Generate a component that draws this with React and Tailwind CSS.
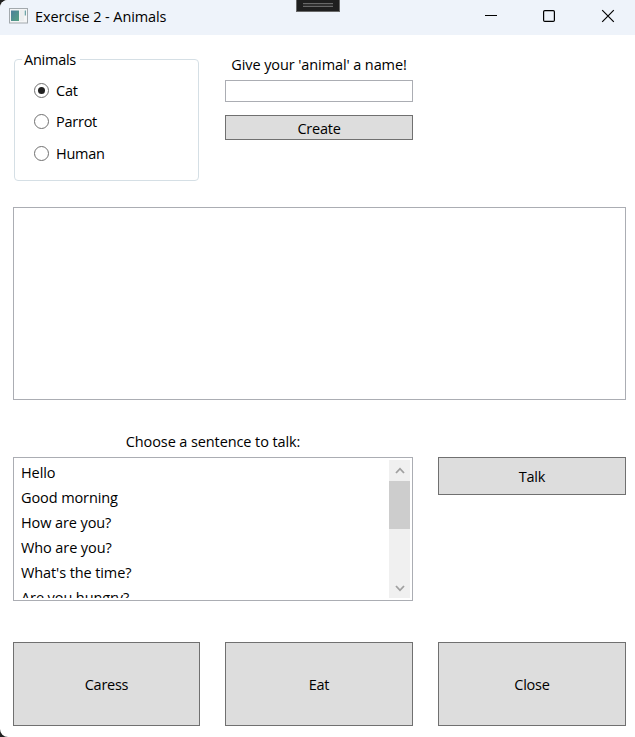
import React from "react";

const SENTENCES = [
  "Hello",
  "Good morning",
  "How are you?",
  "Who are you?",
  "What's the time?",
  "Are you hungry?",
];

function AppIcon() {
  return (
    <svg width="19" height="16" viewBox="0 0 19 16" className="block">
      <defs>
        <linearGradient id="pane" x1="0" y1="0" x2="1" y2="1">
          <stop offset="0" stopColor="#4b7f9c" />
          <stop offset="1" stopColor="#55a283" />
        </linearGradient>
      </defs>
      <rect x="0.5" y="0.5" width="18" height="14.5" fill="#f4f5f6" stroke="#a3a9ad" />
      <rect x="2" y="2.5" width="8" height="10.5" fill="url(#pane)" />
      <rect x="11" y="2" width="4" height="11" fill="#eceeef" />
      <rect x="15.7" y="2.5" width="1.3" height="5" fill="#6fa5a8" />
    </svg>
  );
}

function TitleBar() {
  return (
    <header className="relative flex h-[35px] items-start bg-[#eef3fa]">
      <div className="pl-[9px] pt-[8px]">
        <AppIcon />
      </div>
      <h1 className="ml-[7px] mt-[7px] leading-[20px]">Exercise 2 - Animals</h1>
      <div className="absolute left-[296px] top-0 flex h-[12px] w-[44px] justify-center border border-t-0 border-[#686868] bg-[#1f1f1f]">
        <div className="mt-[3px] h-[4px] w-[30px] border-y border-[#686868] bg-[#303030]" />
      </div>
      <div className="ml-auto flex h-full w-[151px]">
        <svg width="151" height="35" viewBox="0 0 151 35" fill="none" stroke="#000">
          <path d="M1 15.5h12" />
          <rect x="59.6" y="10.6" width="10.8" height="10.8" rx="1.2" strokeWidth="1.2" />
          <path d="M118.2 10.2l11.6 11.6M129.8 10.2l-11.6 11.6" strokeWidth="1.2" />
        </svg>
      </div>
    </header>
  );
}

function Radio({ label, checked }) {
  return (
    <label className="flex h-[20px] items-center">
      <span className="flex size-[15px] shrink-0 items-center justify-center rounded-full border border-[#707070] bg-white">
        {checked && <span className="size-[7px] rounded-full bg-[#212121]" />}
      </span>
      <span className="ml-[7px] pt-px leading-[20px] tracking-[-0.25px]">{label}</span>
    </label>
  );
}

function Button({ children, className = "" }) {
  return (
    <button className={`flex items-center justify-center border border-[#707070] bg-[#dddddd] pt-[2px] tracking-[-0.25px] ${className}`}>
      {children}
    </button>
  );
}

function ScrollBar() {
  return (
    <div className="flex w-[21px] flex-col bg-[#f0f0f0]">
      <svg width="21" height="21" viewBox="0 0 21 21" fill="none" stroke="#a0a0a0" strokeWidth="1.8">
        <path d="M7 13l4-4.3 4 4.3" />
      </svg>
      <div className="h-[48px] bg-[#cdcdcd]" />
      <svg className="mt-auto" width="21" height="21" viewBox="0 0 21 21" fill="none" stroke="#a0a0a0" strokeWidth="1.8">
        <path d="M7 9l4 4.3 4-4.3" />
      </svg>
    </div>
  );
}

export default function App() {
  return (
    <div className="h-[737px] w-[635px] overflow-hidden bg-[#202020] font-['Open_Sans','Noto_Sans',sans-serif] text-[14.5px] leading-[20px] tracking-[-0.1px] text-black">
      <div className="h-full overflow-hidden rounded-l-[8px] bg-white">
        <TitleBar />
        <main className="pl-[13px] pr-[9px]">
          <section className="grid h-[172px] grid-cols-[187px_188px_188px] gap-x-[25px]">
            <fieldset className="ml-px mr-px mt-[14px] h-[132px] rounded-[4px] border border-[#d5dfe5] pl-[19px]">
              <legend className="-ml-[12px] h-[20px] px-[2px] pr-[4px] leading-[22px] tracking-[-0.25px]">Animals</legend>
              <div className="mt-[11px] flex flex-col gap-[11.5px]">
                <Radio label="Cat" checked />
                <Radio label="Parrot" />
                <Radio label="Human" />
              </div>
            </fieldset>
            <div className="flex flex-col">
              <label className="mt-[20px] h-[25px] text-center">Give your 'animal' a name!</label>
              <input className="h-[22px] w-full border border-[#abadb3] bg-white px-1 outline-none" />
              <Button className="mt-[13px] h-[25px]">Create</Button>
            </div>
          </section>

          <div className="h-[193px] border border-[#abadb3]" />

          <section className="mt-[32px] grid grid-cols-[400px_188px] grid-rows-[25px_144px] gap-x-[25px]">
            <div className="text-center">Choose a sentence to talk:</div>
            <div />
            <div className="flex border border-[#abadb3] p-[2px]">
              <ul className="flex-1 overflow-hidden pl-[5px]">
                {SENTENCES.map((text) => (
                  <li key={text} className="h-[25px] leading-[25px]">{text}</li>
                ))}
              </ul>
              <ScrollBar />
            </div>
            <Button className="h-[38px]">Talk</Button>
          </section>

          <section className="mt-[41px] grid h-[84px] grid-cols-[187px_188px_188px] gap-x-[25px]">
            <Button>Caress</Button>
            <Button>Eat</Button>
            <Button>Close</Button>
          </section>
        </main>
      </div>
    </div>
  );
}
